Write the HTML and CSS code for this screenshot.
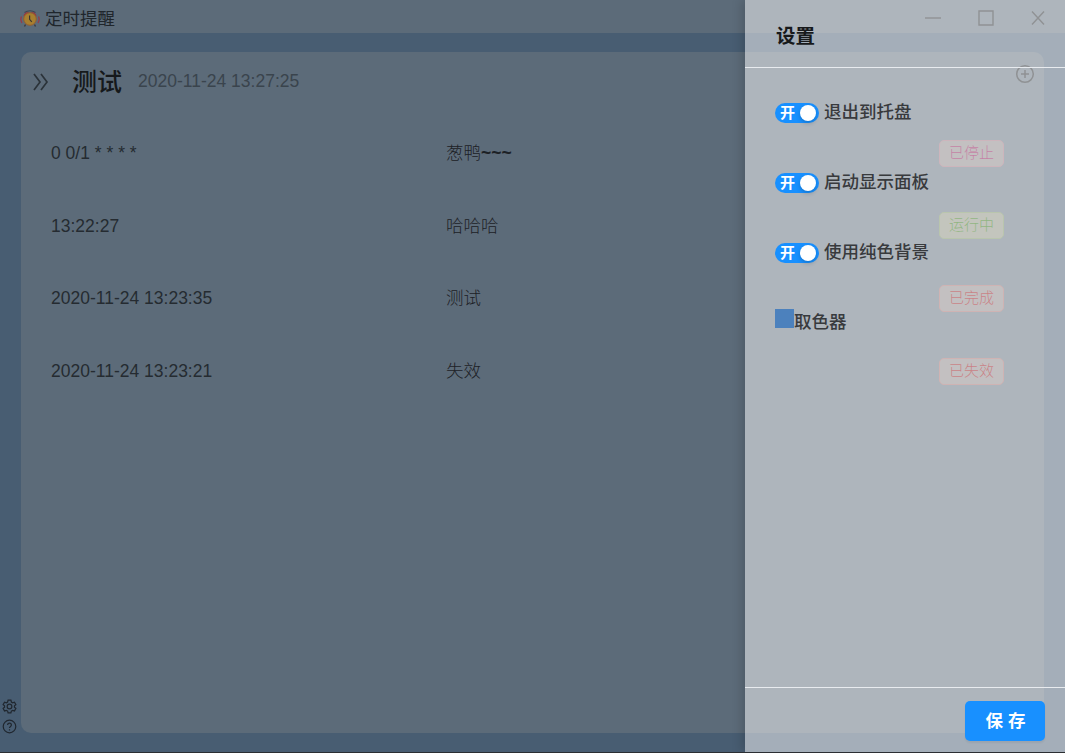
FILE: index.html
```html
<!DOCTYPE html>
<html lang="zh-CN">
<head>
<meta charset="utf-8">
<title>定时提醒</title>
<link rel="stylesheet" href="styles.css">
</head>
<body>
<div class="app">
  <header class="titlebar">
    <svg class="logo" viewBox="0 0 20 20" width="20" height="20">
      <path d="M5.500 15.500l-1 2M14.500 15.500l1 2" stroke="#3b3b40" stroke-width="1.400"/>
      <path d="M4.500 3.500Q10 0 15.500 3.500" fill="none" stroke="#414650" stroke-width="1.200"/>
      <path d="M3.500 6.500Q5 2.500 9 3L4.500 8zM16.500 6.500Q15 2.500 11 3L15.500 8z" fill="#983543"/>
      <path d="M1.500 7.500Q0 10.500 2 14M18.500 7.500Q20 10.500 18 14" fill="none" stroke="#983a48" stroke-width="1.300"/>
      <circle cx="10" cy="10" r="6.300" fill="#a87f2f" stroke="#925d31"/>
      <path d="M9.600 6.500v3.800l2.200 2.500" fill="none" stroke="#3a3733" stroke-width="1.200"/>
    </svg>
    <span class="app-name">定时提醒</span>
    <div class="window-buttons">
      <svg width="18" height="18" viewBox="0 0 18 18"><path d="M1 9h16"/></svg>
      <svg width="18" height="18" viewBox="0 0 18 18"><path d="M2 2h14v14H2z"/></svg>
      <svg width="18" height="18" viewBox="0 0 18 18"><path d="M3 2.500l12 13M15 2.500l-12 13"/></svg>
    </div>
  </header>
  <div class="workspace">
    <nav class="side">
      <svg width="15" height="15" viewBox="0 0 16 16"><path d="M6.500 1.200h3l.5 2 1.300.8 2-.6 1.500 2.600-1.500 1.300v1.500l1.500 1.300-1.500 2.600-2-.6-1.300.8-.5 2h-3l-.5-2-1.300-.8-2 .6-1.500-2.600 1.500-1.300V7.300L1.200 6l1.500-2.600 2 .6L6 3.200z"/><circle cx="8" cy="8" r="2.500"/></svg>
      <svg width="15" height="15" viewBox="0 0 16 16"><circle cx="8" cy="8" r="6.700"/><path d="M6 6.500c0-2.700 4-2.700 4 0C10 8 8 8 8 9.700M8 11v1.300"/></svg>
    </nav>
    <main class="card">
      <div class="card-head">
        <svg class="expand" width="18" height="18" viewBox="0 0 18 18"><path d="M2 1l6 8-6 8M9 1l6 8-6 8"/></svg>
        <h1 class="title">测试</h1>
        <time class="created">2020-11-24 13:27:25</time>
        <svg class="add" width="20" height="20" viewBox="0 0 20 20"><circle cx="10" cy="10" r="8.300"/><path d="M10 6v8M6 10h8"/></svg>
      </div>
      <div class="tasks">
        <div class="task"><span>0 0/1 * * * *</span><span class="note">葱鸭<b class="tilde">~~~</b></span><span class="tag stopped">已停止</span></div>
        <div class="task"><span>13:22:27</span><span class="note">哈哈哈</span><span class="tag running">运行中</span></div>
        <div class="task"><span>2020-11-24 13:23:35</span><span class="note">测试</span><span class="tag ended">已完成</span></div>
        <div class="task"><span>2020-11-24 13:23:21</span><span class="note">失效</span><span class="tag ended">已失效</span></div>
      </div>
    </main>
  </div>
</div>
<aside class="drawer">
  <h2 class="drawer-head">设置</h2>
  <div class="drawer-body">
    <div class="option"><span class="switch">开<i class="knob"></i></span><span class="label">退出到托盘</span></div>
    <div class="option"><span class="switch">开<i class="knob"></i></span><span class="label">启动显示面板</span></div>
    <div class="option"><span class="switch">开<i class="knob"></i></span><span class="label">使用纯色背景</span></div>
    <div class="option picker"><span class="swatch"></span><span class="label">取色器</span></div>
  </div>
  <footer class="drawer-foot"><button class="save">保 存</button></footer>
</aside>
</body>
</html>
```
FILE: styles.css
```css
* { box-sizing: border-box; }
body {
  margin: 0;
  width: 1065px;
  height: 753px;
  overflow: hidden;
  position: relative;
  background: #485d72;
  border-bottom: 1px solid #2b2e32;
  font: 17.5px/26px "Liberation Sans", "Noto Sans CJK SC", sans-serif;
  color: #252b31;
}
svg { display: block; flex: none; }
.app { height: 752px; display: flex; flex-direction: column; }
.titlebar {
  height: 33px;
  flex: none;
  display: flex;
  align-items: center;
  padding: 4px 18px 0 20px;
  background: #5c6b79;
}
.app-name { margin-left: 5px; color: #20262c; }
.window-buttons { margin: 0 0 2px auto; display: flex; gap: 34.500px; }
.window-buttons svg { fill: none; stroke: #202429; stroke-width: 1.400; }
.workspace { flex: 1; display: flex; padding: 19px 21px 19px 0; }
.side {
  width: 21px;
  display: flex;
  flex-direction: column;
  justify-content: flex-end;
  gap: 5px;
  padding-left: 2px;
  margin-bottom: -1px;
}
.side svg { fill: none; stroke: #20272f; stroke-width: 1.300; }
.card { flex: 1; background: #5c6b79; border-radius: 10px; }
.card-head { height: 65px; display: flex; align-items: center; padding: 0 9px 5px 11px; }
.expand { fill: none; stroke: #2b333a; stroke-width: 1.700; }
.title { margin: 0 0 0 22px; font-size: 25px; line-height: 32px; color: #16191b; font-weight: 500; }
.created { margin: 0 0 2px 16px; color: #3a444d; }
.add { margin: 0 0 16px auto; fill: none; stroke: #202429; stroke-width: 1.500; }
.tasks { display: grid; grid-auto-rows: 72.600px; }
.task {
  display: grid;
  grid-template-columns: 395px 493px 65px;
  align-items: center;
  padding-left: 30px;
}
.note { font-weight: 300; color: #1c2126; }
.tilde { font-weight: 700; }
.tag {
  height: 27px;
  border: 1px solid;
  border-radius: 5px;
  font-size: 15px;
  line-height: 24px;
  text-align: center;
  font-weight: 300;
}
.stopped { color: #89004b; background: #878183; border-color: #9b6b78; }
.running { color: #1f6b00; background: #878b7b; border-color: #738b5b; }
.ended { color: #930009; background: #878183; border-color: #9f6666; }
.drawer {
  position: absolute;
  top: 0;
  right: 0;
  width: 320px;
  height: 752px;
  display: flex;
  flex-direction: column;
  background: rgba(255, 255, 255, .5);
  box-shadow: -3px 0 10px rgba(0, 0, 0, .17);
}
.drawer-head {
  height: 68px;
  margin: 0;
  padding: 4px 31px 0;
  border-bottom: 1px solid #e8ebef;
  font-size: 19.5px;
  line-height: 64px;
  color: #17191b;
}
.drawer-body { flex: 1; padding: 10px 30px; color: #383a3d; font-weight: 500; }
.option { height: 70px; display: flex; align-items: center; gap: 5px; }
.label { padding-bottom: 2px; }
.switch {
  width: 44px;
  height: 20px;
  display: flex;
  align-items: center;
  justify-content: space-between;
  padding: 0 3px 0 5px;
  border-radius: 10px;
  background: #1890ff;
  color: #fff;
  font-size: 15px;
  font-weight: 700;
}
.knob { width: 16px; height: 16px; margin-bottom: 1px; border-radius: 50%; background: #fff; box-shadow: 0 2px 4px rgba(0, 35, 60, .25); }
.picker { gap: 0; }
.swatch { width: 19px; height: 19px; margin-bottom: 10px; background: #4c81bd; }
.drawer-foot { height: 65px; border-top: 1px solid #e8ebef; padding: 13px 20px; display: flex; justify-content: flex-end; }
.save {
  width: 80px;
  height: 40px;
  padding: 1px 0 0 1px;
  border: 0;
  border-radius: 5px;
  background: #1890ff;
  color: #fff;
  font: 700 17.5px/39px "Liberation Sans", "Noto Sans CJK SC", sans-serif;
  box-shadow: 0 2px 2px rgba(0, 0, 0, .06);
}
```
